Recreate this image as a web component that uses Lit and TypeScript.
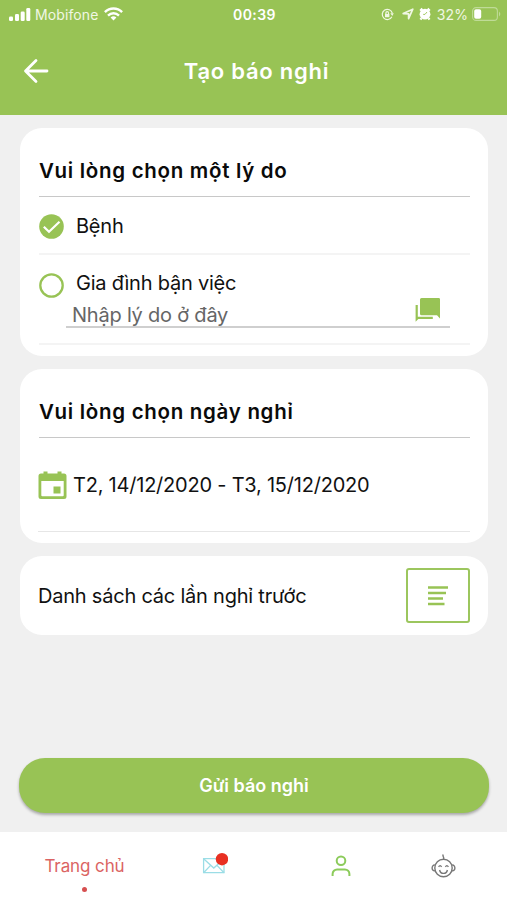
import { LitElement, html, css } from "lit";
import { customElement } from "lit/decorators.js";

@customElement("status-bar")
class StatusBar extends LitElement {
  static styles = css`
    :host { display: grid; grid-template-columns: 1fr auto 1fr; align-items: center; height: 28px; padding: 0 6px 0 8px; color: #f0f7e4; font: 400 14px "Inter", sans-serif; }
    .side { display: flex; align-items: center; }
    .right { justify-content: flex-end; }
    .carrier { margin: 0 6px 0 4px; letter-spacing: 0.1px; }
    .time { font-weight: 600; color: #fff; letter-spacing: 0.4px; font-size: 14px; }
    .pct { margin: 0 4px 0 6px; letter-spacing: 0.1px; }
    svg { display: block; flex: none; }
    .arrow { margin-left: 8px; }
    .alarm { margin-left: 5px; }
  `;
  render() {
    return html`
      <div class="side">
        <svg width="23" height="16" viewBox="0 0 23 16" fill="#fff"><rect x="1" y="10.500" width="4" height="4.500" rx="1.300"/><rect x="7" y="8" width="4" height="7" rx="1.300"/><rect x="12.700" y="5.500" width="4" height="9.500" rx="1.300"/><rect x="18.300" y="2" width="4" height="13" rx="1.300"/></svg>
        <span class="carrier">Mobifone</span>
        <svg width="19" height="14" viewBox="0 0 19 14" fill="none" stroke="#fff" stroke-width="2.400"><path d="M.9 5.200C5.800.3 13.200.3 18.100 5.200"/><path d="M4 8.600C7.200 5.500 11.800 5.500 15 8.600"/><path d="M6.600 10.500Q9.500 8.200 12.400 10.500L9.500 13.600Z" fill="#fff" stroke="none"/></svg>
      </div>
      <div class="time">00:39</div>
      <div class="side right">
        <svg width="13" height="13" viewBox="0 0 13 13" fill="none" stroke="#f0f7e4" stroke-width="1.200"><path d="M10.900 8.800A5.100 5.100 0 1 1 11.300 5.200"/><path d="M9.300 5.300h3.500L11.300 8z" fill="#f0f7e4" stroke="none"/><rect x="4" y="6" width="4.400" height="3.200" fill="#f0f7e4" stroke="none"/><path d="M4.900 6.200V5a1.300 1.300 0 0 1 2.600 0v1.200"/></svg>
        <svg class="arrow" width="12" height="12" viewBox="0 0 12 12" fill="none" stroke="#f0f7e4" stroke-width="1.700" stroke-linejoin="round"><path d="M1.200 5.600 10.800 1.200 6.600 10.600V5.800z"/></svg>
        <svg class="alarm" width="12" height="14" viewBox="0 0 12 14"><circle cx="6" cy="7.200" r="5.400" fill="#fff"/><path d="M1.200 3.800 3.400 1.600M10.800 3.800 8.600 1.600M2.400 11.200 1.500 12.600M9.600 11.200l.9 1.400" stroke="#fff" stroke-width="2.200"/><path d="M6 7.400 8 5M6 7.400H4.200" stroke="#98c355" stroke-width=".9"/></svg>
        <span class="pct">32%</span>
        <svg width="29" height="14" viewBox="0 0 29 14"><rect x=".6" y=".6" width="24.800" height="12.800" rx="3.500" fill="none" stroke="#bfdb97" stroke-width="1.100"/><rect x="2.200" y="2.200" width="7" height="9.600" rx="1.800" fill="#fff"/><path d="M27 4.500q2.600 2.500 0 5z" fill="#bfdb97"/></svg>
      </div>`;
  }
}

@customElement("tab-bar")
class TabBar extends LitElement {
  static styles = css`
    :host { display: grid; grid-template-columns: 169px 90px 163px 43px; height: 68px; background: #fff; }
    .tab { display: flex; justify-content: center; padding-top: 20px; }
    .home { flex-direction: column; align-items: center; justify-content: flex-start; padding-top: 23px; gap: 10px; color: #db6463; font: 400 17px/22px "Inter", sans-serif; }
    .label { letter-spacing: -0.1px; }
    .dot { width: 5px; height: 5px; border-radius: 50%; background: #d64f50; }
    svg { display: block; }
  `;
  render() {
    return html`
      <div class="tab home"><span class="label">Trang chủ</span><span class="dot"></span></div>
      <div class="tab"><svg width="28" height="28" viewBox="0 0 28 28" fill="none" stroke="#9bdde6" stroke-width="1.300"><path d="M3.600 6.700h20.400v14H3.600z"/><path d="m3.600 6.700 10.200 9.300L24 6.700M3.600 20.700l7-7.300M24 20.700l-7-7.300"/><circle cx="22" cy="7.200" r="6.200" fill="#e83022" stroke="none"/></svg></div>
      <div class="tab"><svg width="22" height="26" viewBox="0 0 22 26" fill="none" stroke="#8ccb5b" stroke-width="2"><circle cx="11" cy="8.700" r="4.300"/><path d="M2.600 24v-2a4.500 4.500 0 0 1 4.500-4.500h7.800a4.500 4.500 0 0 1 4.500 4.500v2"/></svg></div>
      <div class="tab"><svg width="25" height="26" viewBox="0 0 25 26" fill="none" stroke="#777" stroke-width="1.400"><circle cx="12.500" cy="16" r="8.700"/><path d="M3.900 13C.2 12.700.2 19.200 3.900 18.800M21.100 13c3.700-.3 3.700 6.200 0 5.800M12.500 7.200c1.300-2-1.700-2.500-.2-4.700"/><path d="M7.600 14.800q1.500-2.400 3 0M14.400 14.800q1.500-2.400 3 0M8.600 18q.7 3.400 3.900 3.400t3.900-3.400"/></svg></div>`;
  }
}

@customElement("app-root")
class AppRoot extends LitElement {
  static styles = css`
    :host { display: flex; flex-direction: column; height: 900px; box-sizing: border-box; background: #f0f0f0; color: #111; font: 400 20px/26px "Inter", sans-serif; letter-spacing: -0.22px; }
    * { box-sizing: border-box; }
    svg { display: block; flex: none; }
    header { height: 115px; background: #98c355; flex: none; letter-spacing: 0; }
    .title { display: grid; grid-template-columns: 48px 1fr 48px; align-items: center; padding: 0 17px 0 23px; height: 86px; color: #fff; text-align: center; }
    h1 { margin: 0; font: 600 22px/28px "Inter", sans-serif; letter-spacing: 0.75px; }
    main { flex: 1; display: flex; flex-direction: column; gap: 13px; padding: 13px 19px 19px 20px; }
    .card { background: #fff; border-radius: 22px; padding: 0 18px 0 19px; flex: none; }
    .reason { height: 228px; }
    .date { height: 174px; }
    h2 { margin: 0; height: 69px; padding-top: 30px; border-bottom: 1px solid #c8c8c8; color: #0a0a0a; font: 600 20.500px/26px "Inter", sans-serif; letter-spacing: 0.7px; }
    .row { display: flex; align-items: center; gap: 12px; height: 58px; padding-top: 2px; border-bottom: 2px solid #f4f4f4; }
    .other { display: grid; grid-template: 26px 32px / 25px 1fr; column-gap: 12px; height: 90px; padding-top: 15px; border-bottom: 2px solid #f4f4f4; }
    .other svg { margin-top: 3px; }
    .field { grid-column: 1 / 3; display: flex; justify-content: space-between; align-items: flex-start; margin: 0 20px 0 27px; padding: 6px 9px 0 6px; border-bottom: 2px solid #cfcfcf; color: #666; }
    .field svg { margin-top: -5px; }
    .day { display: flex; align-items: center; gap: 6px; height: 94px; margin-left: -1px; padding-top: 1px; border-bottom: 1px solid #e6e6e6; }
    .history { display: flex; align-items: center; justify-content: space-between; height: 79px; padding-left: 18px; }
    .list { width: 64px; height: 55px; border: 2px solid #9cc65e; border-radius: 3px; display: grid; place-items: center; }
    .submit { margin: auto -1px 0; flex: none; height: 55px; border: 0; padding: 0; border-radius: 26px; background: #98c355; box-shadow: 0 2px 3px rgba(0,0,0,.3); color: #fff; font: 600 18px/24px "Inter", sans-serif; }
  `;
  render() {
    return html`
      <header>
        <status-bar></status-bar>
        <div class="title">
          <svg width="26" height="26" viewBox="0 0 26 26" fill="none" stroke="#fff" stroke-width="2.800" stroke-linecap="round" stroke-linejoin="round"><path d="M24 13H3M13 2.500 2.500 13 13 23.500"/></svg>
          <h1>Tạo báo nghỉ</h1>
        </div>
      </header>
      <main>
        <section class="card reason">
          <h2>Vui lòng chọn một lý do</h2>
          <div class="row">
            <svg width="25" height="25" viewBox="0 0 25 25"><circle cx="12.500" cy="12.500" r="12.300" fill="#98c355"/><path d="m4.800 12.800 5.200 5L20.500 7.800" fill="none" stroke="#fff" stroke-width="2.200"/></svg>
            <span>Bệnh</span>
          </div>
          <div class="other">
            <svg width="25" height="25" viewBox="0 0 25 25"><circle cx="12.500" cy="12.500" r="11.200" fill="none" stroke="#98c355" stroke-width="2.300"/></svg>
            <span>Gia đình bận việc</span>
            <div class="field">
              <span>Nhập lý do ở đây</span>
              <svg width="26" height="25" viewBox="0 0 26 25" fill="#98c355"><path d="M6.500 1h17.200q1.300 0 1.300 1.300V21.500L22 18.300H6.500q-1.500 0-1.500-1.500V2.500Q5 1 6.500 1z"/><path d="M.6 8H2.800V19.800H17.800V22H3.300L.6 24.800z"/></svg>
            </div>
          </div>
        </section>
        <section class="card date">
          <h2>Vui lòng chọn ngày nghỉ</h2>
          <div class="day">
            <svg width="29" height="29" viewBox="0 0 29 29"><path fill="#98c355" fill-rule="evenodd" d="M5.500.5h4v2h10v-2h4v2H26q2.500 0 2.500 2.500v20.500q0 2.500-2.500 2.500H3q-2.500 0-2.500-2.500V5Q.5 2.500 3 2.500h2.500zM3.300 10v14.200q0 1 1 1h20.400q1 0 1-1V10z"/><rect x="15.500" y="15.500" width="7" height="7" fill="#98c355"/></svg>
            <span>T2, 14/12/2020 - T3, 15/12/2020</span>
          </div>
        </section>
        <section class="card history">
          <span>Danh sách các lần nghỉ trước</span>
          <div class="list"><svg width="20" height="20" viewBox="0 0 20 20" stroke="#98c355" stroke-width="2.500"><path d="M0 1.500h20M0 7h18M0 12.500h15M0 18h16.500"/></svg></div>
        </section>
        <button class="submit">Gửi báo nghỉ</button>
      </main>
      <tab-bar></tab-bar>`;
  }
}
